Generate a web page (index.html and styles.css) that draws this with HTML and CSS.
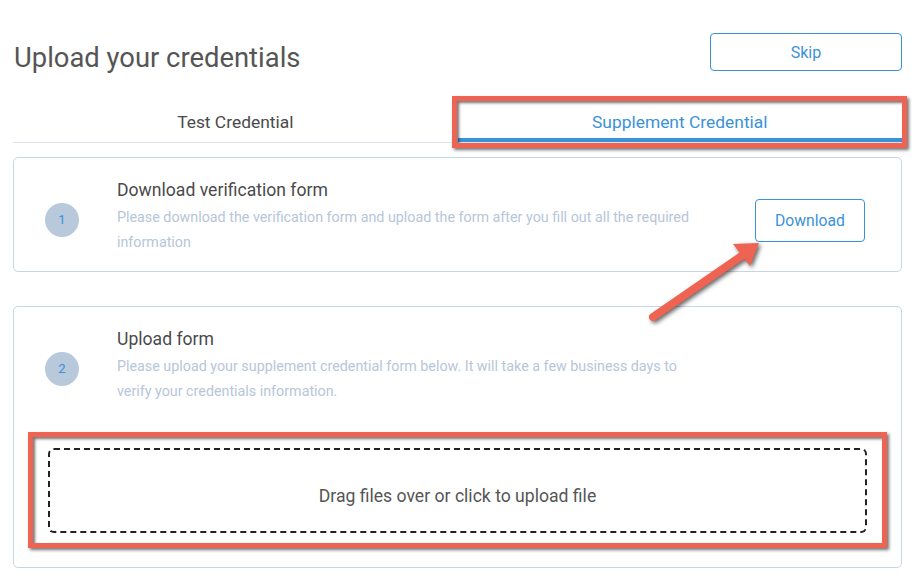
FILE: index.html
```html
<!DOCTYPE html>
<html lang="en">
    <head>
        <meta charset="UTF-8" />
        <meta name="viewport" content="width=device-width, initial-scale=1.0" />
        <title>Upload your credentials</title>
        <link rel="stylesheet" href="styles.css">
    </head>
    <body>
        <div class="page">
            <div class="header">
                <h1 class="title">Upload your credentials</h1>
                <button class="btn btn-skip">Skip</button>
            </div>
            <div class="tabs">
                <div class="tab">Test Credential</div>
                <div class="tab tab-active">Supplement Credential</div>
            </div>

            <div class="card">
                <div class="step-row">
                    <div class="step-num">1</div>
                    <div class="step-text">
                        <div class="step-title">Download verification form</div>
                        <div class="step-desc">Please download the verification form and upload the form after you fill out all the required information</div>
                    </div>
                    <button class="btn btn-download">Download</button>
                </div>
            </div>

            <div class="card card-upload">
                <div class="step-row">
                    <div class="step-num">2</div>
                    <div class="step-text">
                        <div class="step-title">Upload form</div>
                        <div class="step-desc">Please upload your supplement credential form below. It will take a few business days to verify your credentials information.</div>
                    </div>
                </div>
                <div class="dropzone">Drag files over or click to upload file</div>
            </div>

            <!-- annotation arrow -->
            <svg class="arrow" width="914" height="586" viewBox="0 0 914 586">
                <line x1="653" y1="317" x2="743" y2="255" stroke="#ee6352" stroke-width="8" stroke-linecap="round" />
                <polygon points="759,243 733,244 750,266" fill="#ee6352" />
            </svg>
        </div>
    </body>
</html>
```

FILE: styles.css
```css
body {
    margin: 0;
    font-family: Roboto, "Liberation Sans", sans-serif;
    background-color: white;
}
.page {
    position: relative;
    width: 889px;
    padding: 0 12px 0 13px;
}
.header {
    display: flex;
    justify-content: space-between;
    align-items: center;
    padding-top: 33px;
    height: 38px;
}
.title {
    margin: 0 0 0 1px;
    padding-top: 12px;
    font-size: 27.4px;
    font-weight: normal;
    color: #555555;
}
.btn {
    background-color: white;
    border: 1px solid #3a92d8;
    border-radius: 4px;
    color: #3a92d8;
    font-family: Roboto, "Liberation Sans", sans-serif;
    padding: 0;
}
.btn-skip {
    width: 192px;
    height: 38px;
    font-size: 16px;
}
.tabs {
    display: flex;
    margin-top: 27px;
    border-bottom: 1px solid #dde3ea;
}
.tab {
    flex: 1;
    height: 44px;
    line-height: 48px;
    text-align: center;
    font-size: 17.4px;
    color: #4a4a4a;
    box-sizing: border-box;
}
.tab-active {
    position: relative;
    color: #3a92d8;
    border-bottom: 4px solid #3a92d8;
}
.tab-active::after {
    content: "";
    position: absolute;
    left: -6px;
    right: -5px;
    top: -2px;
    bottom: -10px;
    border: 5px solid #ee6352;
    box-shadow: 2px 2px 3px rgba(0, 0, 0, 0.55), inset 2px 2px 3px rgba(0, 0, 0, 0.55);
}
.card {
    margin-top: 14px;
    border: 1px solid #c8d5e4;
    border-radius: 5px;
}
.card-upload {
    margin-top: 34px;
    padding-bottom: 34px;
}
.step-row {
    display: flex;
    align-items: flex-start;
    padding: 20px 36px 16px 31px;
}
.step-num {
    width: 34px;
    height: 34px;
    margin-top: 25px;
    border-radius: 50%;
    background-color: #b8c9dc;
    color: #3a8fd6;
    font-size: 13px;
    line-height: 34px;
    text-align: center;
}
.step-text {
    width: 590px;
    margin-left: 38px;
}
.step-title {
    font-size: 17.6px;
    line-height: 24px;
    margin-bottom: 3px;
    color: #4a4a4a;
}
.step-desc {
    font-size: 14.3px;
    line-height: 25px;
    color: #b7c6d9;
}
.btn-download {
    margin-left: auto;
    margin-top: 21px;
    width: 110px;
    height: 43px;
    font-size: 15.7px;
}
.dropzone {
    position: relative;
    box-sizing: border-box;
    margin: 28px 34px 0 34px;
    height: 85px;
    padding-top: 11px;
    border: 2px dashed #222222;
    border-radius: 6px;
    display: flex;
    align-items: center;
    justify-content: center;
    font-size: 17.6px;
    color: #555555;
}
.dropzone::after {
    content: "";
    position: absolute;
    left: -22px;
    right: -22px;
    top: -18px;
    bottom: -17px;
    border: 5px solid #ee6352;
    box-shadow: 2px 2px 3px rgba(0, 0, 0, 0.55), inset 2px 2px 3px rgba(0, 0, 0, 0.55);
}
.arrow {
    position: absolute;
    left: 0;
    top: 0;
    pointer-events: none;
    filter: drop-shadow(2px 2px 2px rgba(0, 0, 0, 0.6));
}
```
